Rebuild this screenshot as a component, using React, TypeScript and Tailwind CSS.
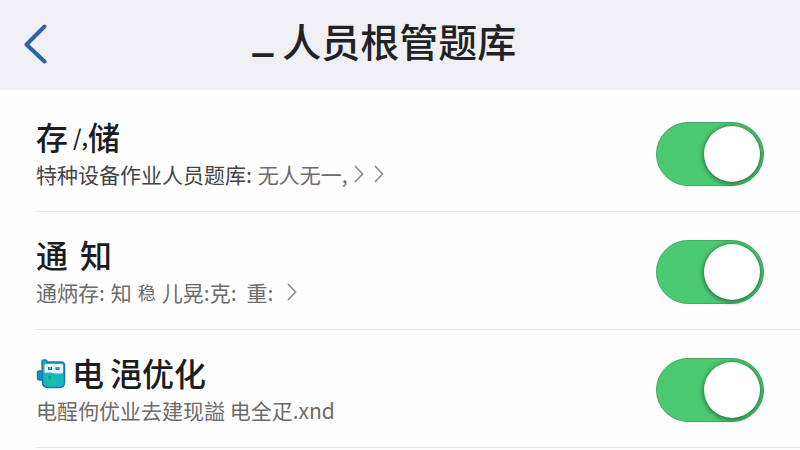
import { useState, type ReactNode } from "react";

function BackIcon() {
  return (
    <svg viewBox="0 0 24 40" className="h-10 w-6" fill="none" stroke="#2765a3" strokeWidth="4" strokeLinecap="round" strokeLinejoin="round" aria-hidden="true">
      <path d="M20.500 2.500 2.500 20.500 20.500 37.500" />
    </svg>
  );
}

function Chevron() {
  return (
    <svg viewBox="0 0 10 18" className="h-[18px] w-[10px] shrink-0" fill="none" stroke="#8b8b8b" strokeWidth="1.7" aria-hidden="true">
      <path d="M1 1 8.500 9 1 17" />
    </svg>
  );
}

function BatteryIcon() {
  return (
    <svg viewBox="0 0 30 30" className="h-[30px] w-[30px] shrink-0" aria-hidden="true">
      <path d="M7 12H3.500Q1.500 12 1.500 14v5q0 2 2 2H7" fill="#159ab5" stroke="#147ba7" strokeWidth="1.500" />
      <path d="M6 5V2.500Q6 1 7.500 1h2Q11 1 11 3h14q3.500 0 3.500 3.500V23q0 5.500-5.500 5.500H12q-5.500 0-5.500-5.500z" fill="#2ba8d6" stroke="#1679ad" strokeWidth="1.500" />
      <path d="M8.500 13h18.500v9.500q0 4-4 4H12.500q-4 0-4-4z" fill="#14b6c0" />
      <path d="M9 17q4-2 7 0t4 5-3 4.500h-4.500q-3.500 0-3.500-4z" fill="#18bfa0" />
      <path d="M10 5h15.500q1.500 0 1.500 1.500V14q-5 1-9.500 0t-9 0V6.500Q8.500 5 10 5z" fill="#e4f7fc" />
      <path d="M12 8h4v3h-4zM19.500 8h4v3h-4z" fill="#176f9f" />
      <path d="M13 9h2M20.500 9h2" stroke="#b8e8f5" />
      <path d="M12 18h2.500l-1 2.500" fill="none" stroke="#128b82" strokeWidth="1.500" />
    </svg>
  );
}

function Toggle({ label }: { label: string }) {
  const [on, setOn] = useState(true);
  return (
    <label className="relative block h-16 w-[108px] shrink-0 cursor-pointer">
      <input type="checkbox" role="switch" aria-label={label} checked={on} onChange={() => setOn(!on)} className="peer sr-only" />
      <span className="block h-full w-full rounded-full border border-[#43a866] bg-gray-300 peer-checked:bg-[#4bc971]" />
      <span className="absolute top-1 left-1 h-14 w-14 rounded-full bg-white shadow-[0_1px_4px_1px_rgba(20,80,40,0.7)] peer-checked:left-12" />
    </label>
  );
}

function Row({ label, title, children }: { label: string; title: ReactNode; children: ReactNode }) {
  return (
    <li className="ml-9 flex items-start justify-between border-b border-[#e6e6e8] pt-7 pr-9 pb-[25px]">
      <div>
        <h2 className="flex h-7 items-center text-[32px] leading-7 font-medium whitespace-pre text-[#1b1c1e]">{title}</h2>
        <p className="mt-3 flex h-6 items-center gap-1.5 text-[21px] leading-6 whitespace-pre text-[#6b6b6b]">{children}</p>
      </div>
      <Toggle label={label} />
    </li>
  );
}

export default function App() {
  return (
    <main lang="zh-CN" className="min-h-screen bg-[#fefefe] font-['Noto_Sans_CJK_SC',sans-serif]">
      <header className="grid h-[90px] grid-cols-[1fr_auto_1fr] items-center bg-[#f0eff3] pr-14 pb-0.5 pl-6">
        <button type="button" aria-label="返回" className="w-6">
          <BackIcon />
        </button>
        <h1 className="flex items-center gap-2 pb-2 text-[39px] leading-[52px] font-medium text-[#222225]">
          <span className="pb-3 font-black">_</span>
          <span>人员根管题库</span>
        </h1>
      </header>
      <ul className="pt-1">
        <Row
          label="存储"
          title={
            <>
              <span>存</span>
              <span className="text-[22px]"> /,</span>
              <span>储</span>
            </>
          }
        >
          <span className="text-[#434343]">特种设备作业人员题库:</span>
          <span>无人无一,</span>
          <Chevron />
          <span className="ml-1 flex">
            <Chevron />
          </span>
        </Row>
        <Row
          label="通知"
          title={
            <span className="flex gap-3">
              <span>通</span>
              <span>知</span>
            </span>
          }
        >
          <span>通炳存:</span>
          <span>知</span>
          <span className="text-lg leading-6">稳</span>
          <span>儿晃:克:</span>
          <span className="ml-1">重:</span>
          <span className="ml-2 flex">
            <Chevron />
          </span>
        </Row>
        <Row
          label="电池优化"
          title={
            <span className="flex items-center gap-1.5">
              <span className="pt-1">
                <BatteryIcon />
              </span>
              <span>电</span>
              <span>浥优化</span>
            </span>
          }
        >
          电酲佝优业去建现謚 电全疋.xnd
        </Row>
      </ul>
    </main>
  );
}
